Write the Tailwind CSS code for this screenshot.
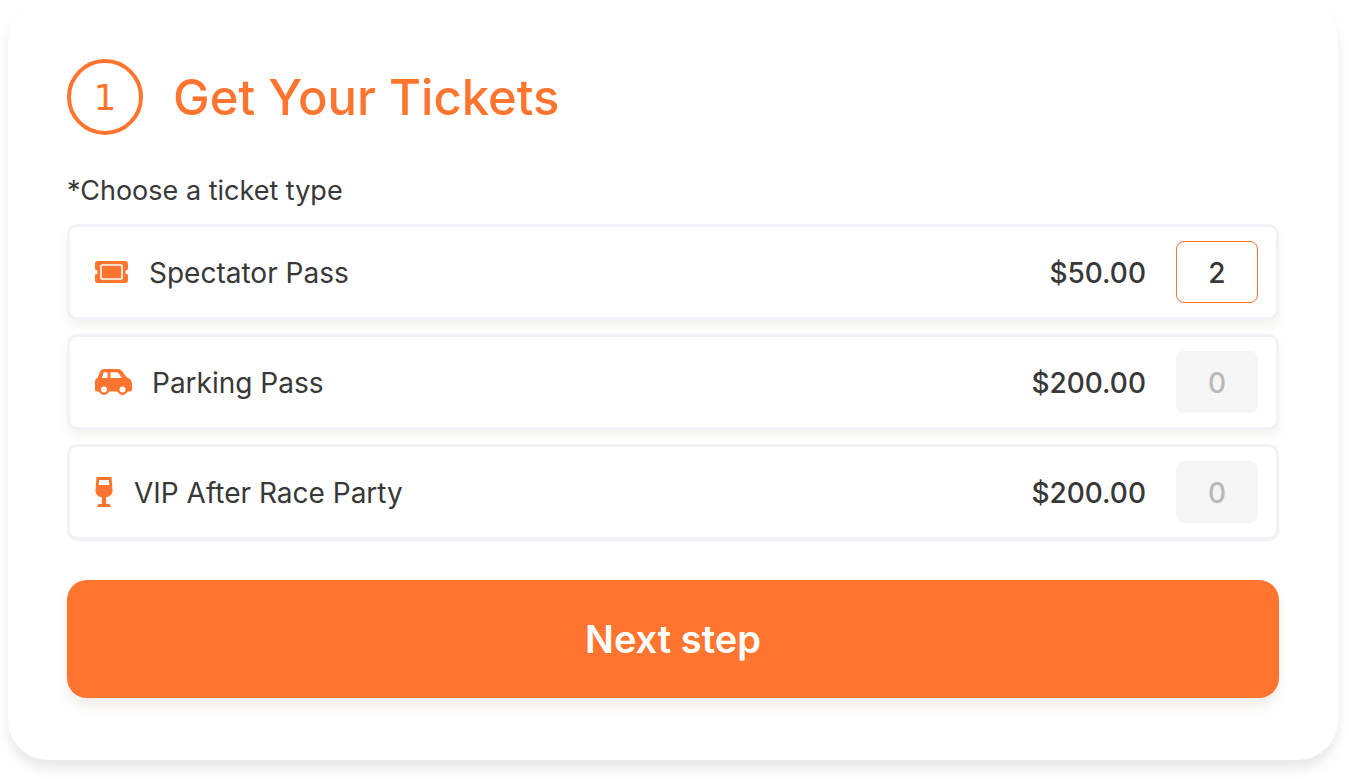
<!DOCTYPE html>
<html lang="en">

<head>
    <meta charset="UTF-8">
    <meta name="viewport" content="width=device-width, initial-scale=1.0">
    <title>Get Your Tickets</title>
    <script src="https://cdn.jsdelivr.net/npm/@tailwindcss/browser@4"></script>
</head>

<body class="bg-white pl-2 pr-[11px] pb-5 font-['Inter',sans-serif] text-[#383838]">
    <form class="rounded-[40px] bg-white px-[59px] pt-[59px] pb-[62px] shadow-[0_9px_12px_rgba(0,0,0,0.09)]">
        <!-- Step header -->
        <header class="flex items-center gap-[30px] text-[#ff7530]">
            <span
                class="flex size-[76px] items-center justify-center rounded-full border-4 border-[#ff7530] pt-[2px] font-['DejaVu_Sans',sans-serif] text-4xl">1</span>
            <h1 class="pt-[2px] text-[49px] leading-[74px] font-medium">Get Your Tickets</h1>
        </header>

        <!-- Ticket types -->
        <fieldset>
            <legend class="pt-[37px] pb-[15px] text-[27px] leading-[37px]">*Choose a ticket type</legend>
            <div class="flex flex-col gap-[14px]">
                <div
                    class="flex h-24 items-center rounded-[10px] border-[3px] border-[#f0f2f7] bg-white pr-[18px] pl-6 shadow-[0_6px_8px_rgba(100,90,40,0.07)]">
                    <svg class="mr-5 h-6 w-[35px]" viewBox="0 0 35 24" fill="none" aria-hidden="true">
                        <path fill="#ff7530"
                            d="M4 1h27a3 3 0 0 1 3 3v5.500a2.500 2.500 0 0 0 0 5v5.500a3 3 0 0 1-3 3H4a3 3 0 0 1-3-3v-5.500a2.500 2.500 0 0 0 0-5V4a3 3 0 0 1 3-3Z" />
                        <rect x="7" y="5" width="21" height="14" rx="1" stroke="#fff" stroke-width="1.600" />
                    </svg>
                    <label for="spectator" class="flex-1 pt-[2px] text-[28px]">Spectator Pass</label>
                    <span class="mr-[30px] pt-[2px] text-[28px] font-medium">$50.00</span>
                    <input id="spectator" type="text" inputmode="numeric" value="2"
                        class="h-[62px] w-[82px] rounded-lg border border-[#ff7530] bg-white pt-[2px] text-center text-[28px] font-medium outline-none">
                </div>
                <div
                    class="flex h-24 items-center rounded-[10px] border-[3px] border-[#f0f2f7] bg-white pr-[18px] pl-6 shadow-[0_6px_8px_rgba(100,90,40,0.07)]">
                    <svg class="mr-5 h-7 w-[38px]" viewBox="0 0 38 28" fill="none" aria-hidden="true">
                        <path fill="#ff7530"
                            d="M10 1h13.500c2 0 3 .6 4.200 1.800L33 9.500c3.500 1 5 3.500 5 6.500v5.500c0 1.200-.8 2-2 2H3c-1.200 0-2-.8-2-2V14c0-2 1-3.500 2.500-4.200L6 3.800C6.800 2 8 1 10 1Z" />
                        <path fill="#fff" d="M10 4.300h3.500V10H8l1.300-5c.1-.4.300-.7.700-.7ZM16.500 4.300h6.300c.7 0 1.200.2 1.600.8l3.600 4.900H16.500V4.300Z" />
                        <circle cx="10" cy="21.500" r="4.200" fill="#fff" stroke="#ff7530" stroke-width="2.400" />
                        <circle cx="28.500" cy="21.500" r="4.200" fill="#fff" stroke="#ff7530" stroke-width="2.400" />
                    </svg>
                    <label for="parking" class="flex-1 pt-[2px] text-[28px]">Parking Pass</label>
                    <span class="mr-[30px] pt-[2px] text-[28px] font-medium">$200.00</span>
                    <input id="parking" type="text" inputmode="numeric" placeholder="0"
                        class="h-[62px] w-[82px] rounded-lg bg-[#f5f5f5] pt-[2px] text-center text-[28px] font-medium outline-none placeholder:text-[#b8b8b8]">
                </div>
                <div
                    class="flex h-24 items-center rounded-[10px] border-[3px] border-[#f0f2f7] bg-white pr-[18px] pl-6 shadow-[0_1px_1px_rgba(100,90,40,0.08)]">
                    <svg class="mr-5 h-8 w-5" viewBox="0 0 20 32" fill="none" aria-hidden="true">
                        <path fill="#ff7530"
                            d="M2.500 1h15l1 13c.3 4-2.500 6.800-6.300 7.300V28H15c1 0 1.500.8 1.500 2v1h-13v-1c0-1.200.5-2 1.500-2h2.800v-6.700C4 20.800 1.200 18 1.500 14l1-13Z" />
                        <path fill="#fff" d="M5.200 4h9.600l.5 5H4.700l.5-5Z" />
                    </svg>
                    <label for="party" class="flex-1 pt-[2px] text-[28px]">VIP After Race Party</label>
                    <span class="mr-[30px] pt-[2px] text-[28px] font-medium">$200.00</span>
                    <input id="party" type="text" inputmode="numeric" placeholder="0"
                        class="h-[62px] w-[82px] rounded-lg bg-[#f5f5f5] pt-[2px] text-center text-[28px] font-medium outline-none placeholder:text-[#b8b8b8]">
                </div>
            </div>
        </fieldset>

        <button type="button"
            class="mt-10 h-[118px] w-full rounded-[20px] bg-[#ff7530] text-[38px] font-semibold text-white shadow-[0_8px_12px_rgba(100,80,30,0.1)]">Next
            step</button>
    </form>
</body>

</html>
